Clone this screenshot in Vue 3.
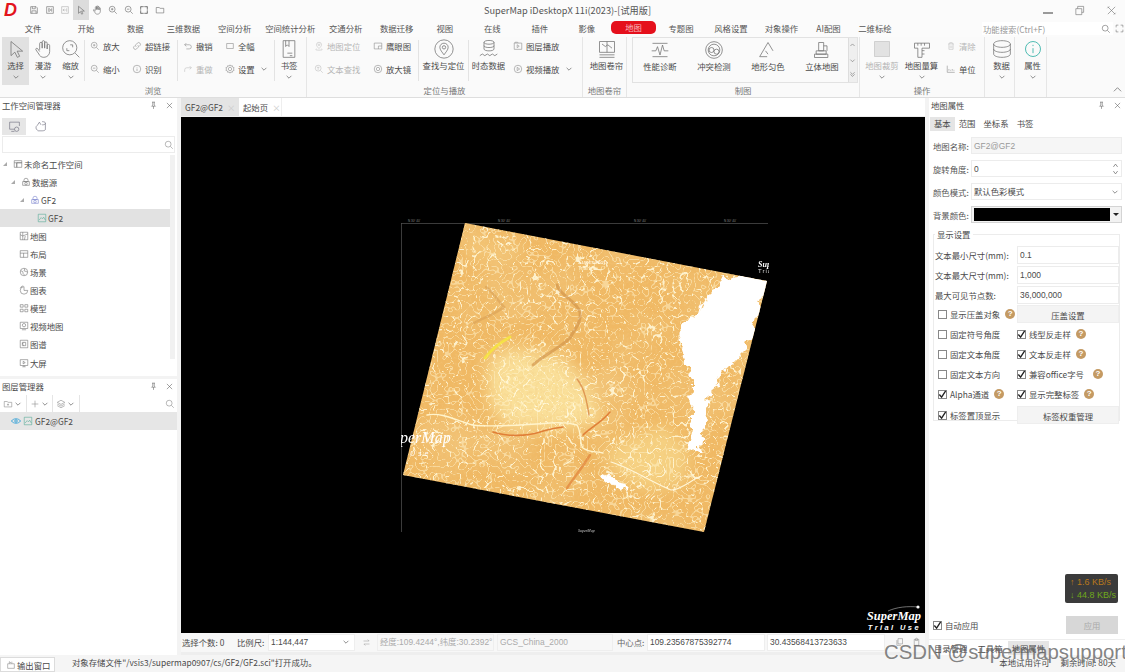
<script setup>
const icons = {
  save: 'M4 4h13l3 3v13H4zM8 4v5h7V4M7 20v-6h10v6',
  saveAs: 'M4 4h16v16H4zM9 8l5 4-5 4zM16 8v8',
  saveOff: 'M4 4h16v16H4zM10 9l-3 3 3 3M7 12h7M16 8v8',
  pointer: 'M6 3v17l4.6-4.2 3 6.2 2.8-1.3-3-6.1H20z',
  hand: 'M8 13V5.5a1.5 1.5 0 0 1 3 0V11V3.5a1.5 1.5 0 0 1 3 0V11V5a1.5 1.5 0 0 1 3 0v7V8a1.5 1.5 0 0 1 3 0v7c0 4-3 7-7 7-3 0-5-1.5-6-4l-3.5-5c-.8-1.5 1-2.5 2-1.5L8 15',
  zoomCircle: 'M10.5 2a8.5 8.5 0 1 0 0 17a8.5 8.5 0 0 0 0-17zM17 17l5 5M7 11v3h3M14 10V7h-3',
  zoomIn: 'M10 3a7 7 0 1 0 0 14a7 7 0 0 0 0-14zM15.5 15.5L21 21M7 10h6M10 7v6',
  zoomOut: 'M10 3a7 7 0 1 0 0 14a7 7 0 0 0 0-14zM15.5 15.5L21 21M7 10h6',
  fit: 'M4 4h16v16H4zM4 9V4h5M15 4h5v5M20 15v5h-5M9 20H4v-5',
  folder: 'M3 6h7l2 2h9v11H3z',
  link: 'M10 14a4 4 0 0 1 0-6l3-3a4 4 0 0 1 6 6l-2 2M14 10a4 4 0 0 1 0 6l-3 3a4 4 0 0 1-6-6l2-2',
  info: 'M12 3a9 9 0 1 0 0 18a9 9 0 0 0 0-18zM12 11v6M12 7v1.5',
  undo: 'M8 5L4 9l4 4M4 9h11a5 5 0 0 1 0 10H8',
  redo: 'M16 5l4 4-4 4M20 9H9a5 5 0 0 0-5 5v5',
  frame: 'M4 6h16v12H4z',
  gear: 'M12 8a4 4 0 1 0 0 8a4 4 0 0 0 0-8zM12 2l2 3 3.5-1 1 3.5L22 9l-2 3 2 3-3.5 1.5-1 3.5-3.5-1-2 3-2-3-3.5 1-1-3.5L2 15l2-3-2-3 3.5-1.5 1-3.5L10 5z',
  bookmark: 'M5 2h14v20H5zM8 2v7l2-2 2 2V2M10 17h6M13 20h3',
  locate: 'M12 3a6 6 0 0 0-6 6c0 3 3 6 6 9 3-3 6-6 6-9a6 6 0 0 0-6-6zM12 7a2 2 0 1 0 0 4a2 2 0 0 0 0-4zM6 19c-3 1-3 3 6 3s9-2 6-3',
  search: 'M10 3a7 7 0 1 0 0 14a7 7 0 0 0 0-14zM15.5 15.5L21 21',
  findText: 'M10 3a7 7 0 1 0 0 14a7 7 0 0 0 0-14zM15.5 15.5L21 21M7 8h6M10 8v6',
  eye: 'M3 5h18v14H3zM13 12h8M13 12v7',
  lens: 'M12 3a9 9 0 1 0 0 18a9 9 0 0 0 0-18zM12 8a4 4 0 1 0 0 8a4 4 0 0 0 0-8z',
  findLoc: 'M12 1a11 11 0 1 0 0 22a11 11 0 0 0 0-22zM12 5a5 5 0 0 0-5 5c0 3 3 6 5 9 2-3 5-6 5-9a5 5 0 0 0-5-5zM12 8a2 2 0 1 0 0 4a2 2 0 0 0 0-4z',
  temporal: 'M6 4c0-3 12-3 12 0v8c0 3-12 3-12 0zM6 4c0 3 12 3 12 0M6 8c0 3 12 3 12 0M1 20l3-2 3 2 3-2 3 2 3-2 3 2 3-2',
  layerPlay: 'M3 5h18v15H3zM10 9l5 3.5-5 3.5zM3 5l2-2h6l2 2',
  videoPlay: 'M12 3a9 9 0 1 0 0 18a9 9 0 0 0 0-18zM10 8l6 4-6 4z',
  swipe: 'M3 3h18v13H3zM3 19h18M3 22h18M6 6l4 3 3-2 5 4M12 3v13',
  perf: 'M3 4h18M3 20h18M2 13h5l2-5 3 10 3-12 2 7h5',
  conflict: 'M12 2a10 10 0 1 0 0 20a10 10 0 0 0 0-20zM12 5a7 7 0 1 0 0 14a7 7 0 0 0 0-14zM9 9a3 3 0 1 0 0 6a3 3 0 0 0 0-6zM15 11a3 3 0 1 0 0 6a3 3 0 0 0 0-6z',
  terrain: 'M2 20L12 3l6 10M2 20h9M9 13l3 4',
  solid: 'M8 3h6v10H8zM3 17h16v4H3zM5 13h12v4H5zM14 7h4v6',
  clip: 'M3 3h18v18H3z',
  measure: 'M3 5h18v6H12v11H7V11H3zM7 5v3M11 5v3M15 5v3M12 14h3M12 18h3',
  clear: 'M5 7h14M9 7V4h6v3M7 7v13h10V7M10 11v6M14 11v6',
  unit: 'M3 4v16h18M7 16v-4M11 16v-2M15 16v-4M19 16v-2',
  data: 'M12 2c5 0 10 1.5 10 4v12c0 2.5-5 4-10 4s-10-1.5-10-4V6c0-2.5 5-4 10-4zM2 6c0 2.5 5 4 10 4s10-1.5 10-4M2 12c0 2.5 5 4 10 4s10-1.5 10-4',
  ws: 'M3 4h18v5H9v11H3zM9 9h12v11H9zM3 9h6',
  ds: 'M12 3a5 5 0 0 0-5 5v3h10V8a5 5 0 0 0-5-5zM4 11h16v9H4zM12 13a3 3 0 1 0 0 6a3 3 0 0 0 0-6z',
  map: 'M3 3h18v18H3zM9 3v18M3 9l6 3 12-5M13 21l2-9',
  layout: 'M3 4h18v16H3zM3 10h18M11 10v10',
  scene: 'M12 3a9 9 0 1 0 0 18a9 9 0 0 0 0-18zM4 9l5 2 1 5 4 4M14 4l-2 5 8 3',
  chart: 'M12 4a9 9 0 1 0 9 9h-9zM10 2a9 9 0 0 0-7 6',
  model: 'M3 4h7v6H3zM14 4h7v6h-7zM3 15h7v6H3zM14 15h7v6h-7z',
  video: 'M3 3h18v15H3zM12 6a4 4 0 1 0 0 8a4 4 0 0 0 0-8zM7 21h10',
  atlas: 'M3 3h18v18H3zM8 8v8h8V8zM8 12l4 4M8 12l4-4',
  screen: 'M3 4h18v14H3zM10 8l5 3-5 3zM8 21h8M12 18v3',
  raster: 'M3 3h18v18H3zM5 17l5-6 3 3 3-4 4 7',
  pin: 'M8 3h8M10 3v8l-3 3h10l-3-3V3M12 14v7',
  close: 'M5 5l14 14M19 5L5 19',
  wsLocal: 'M3 4h18v7M3 4v13h9M6 21h6M16 13a4 4 0 1 0 0 8a4 4 0 0 0 0-8z',
  wsCloud: 'M7 19a5 5 0 0 1-1-9l4-6 3 5M15 3c3 0 6 1 6 2.5v12c0 1.5-3 2.5-6 2.5H7M15 9c3 0 6-1 6-2.5',
  addFile: 'M3 6h7l2 2h9v11H3zM12 11v5M9.5 13.5h5',
  plus: 'M12 4v16M4 12h16',
  layers: 'M12 3l9 5-9 5-9-5zM3 12l9 5 9-5M3 16l9 5 9-5',
  swap: 'M4 8h15l-4-4M20 16H5l4 4',
  copy: 'M8 3h12v14H8zM5 7v14h11',
  paste: 'M6 5h12v16H6zM9 5a3 3 0 0 1 6 0M9 5v3h6V5',
  output: 'M4 9h16v11H4zM8 9V4l4 3M14 4v5'
}

const tabs = [
  ['文件', 55], ['开始', 51], ['数据', 47.5], ['三维数据', 49], ['空间分析', 53.5], ['空间统计分析', 57.5],
  ['交通分析', 53.5], ['数据迁移', 48.5], ['视图', 47.5], ['在线', 47.5], ['插件', 47.5], ['影像', 46.5],
  ['地图', 47], ['专题图', 48], ['风格设置', 52], ['对象操作', 49], ['AI配图', 45], ['二维标绘', 48]
]
const quick = ['save', 'saveAs', 'saveOff', 'pointer', 'hand', 'zoomIn', 'zoomOut', 'fit', 'folder']

const big = (text, icon, w, caret = false, off = false) => ({ kind: 'big', text, icon, w, caret, off })
const col = (w, ...rows) => ({ kind: 'col', w, rows })
const row = (text, icon, off = false, caret = false) => ({ text, icon, off, caret })
const sep = { kind: 'sep' }

const groups = [
  { label: '浏览', w: 307, items: [
    big('选择', 'pointer', 27, true), big('漫游', 'hand', 28, true), big('缩放', 'zoomCircle', 27, true), sep,
    col(42, row('放大', 'zoomIn'), row('缩小', 'zoomOut')), col(50, row('超链接', 'link'), row('识别', 'info')), sep,
    col(42, row('撤销', 'undo'), row('重做', 'redo', true)), col(54, row('全幅', 'frame'), row('设置', 'gear', false, true)), sep,
    big('书签', 'bookmark', 28, true)
  ] },
  { label: '定位与播放', w: 276, items: [
    col(59, row('地图定位', 'locate', true), row('文本查找', 'findText', true)), col(50, row('鹰眼图', 'eye'), row('放大镜', 'lens')), sep,
    big('查找与定位', 'findLoc', 49), sep,
    big('时态数据', 'temporal', 39), col(68, row('图层播放', 'layerPlay'), row('视频播放', 'videoPlay', false, true))
  ] },
  { label: '地图卷帘', w: 44, items: [big('地图卷帘', 'swipe', 43)] },
  { label: '制图', w: 233, gallery: [
    ['性能诊断', 'perf'], ['冲突检测', 'conflict'], ['地形匀色', 'terrain'], ['立体地图', 'solid']
  ] },
  { label: '操作', w: 125, items: [
    big('地图裁剪', 'clip', 40, true, true), big('地图量算', 'measure', 39, true),
    col(42, row('清除', 'clear', true), row('单位', 'unit'))
  ] },
  { label: '', w: 30, items: [big('数据', 'data', 29, true)] },
  { label: '', w: 32, items: [big('属性', 'info', 31, true)] }
]

const tree = [
  { text: '未命名工作空间', icon: 'ws', pad: 3, arrow: true },
  { text: '数据源', icon: 'ds', pad: 11, arrow: true },
  { text: 'GF2', icon: 'ds', pad: 20, arrow: true, blue: true },
  { text: 'GF2', icon: 'raster', pad: 37, selected: true, green: true },
  { text: '地图', icon: 'map', pad: 19 },
  { text: '布局', icon: 'layout', pad: 19 },
  { text: '场景', icon: 'scene', pad: 19 },
  { text: '图表', icon: 'chart', pad: 19 },
  { text: '模型', icon: 'model', pad: 19 },
  { text: '视频地图', icon: 'video', pad: 19 },
  { text: '图谱', icon: 'atlas', pad: 19 },
  { text: '大屏', icon: 'screen', pad: 19 }
]

const sizeRows = [
  ['文本最小尺寸(mm):', '0.1'],
  ['文本最大尺寸(mm):', '1,000'],
  ['最大可见节点数:', '36,000,000']
]
const checks = [
  [{ text: '固定符号角度' }, { text: '线型反走样', on: true, help: true }],
  [{ text: '固定文本角度' }, { text: '文本反走样', on: true, help: true }],
  [{ text: '固定文本方向' }, { text: '兼容office字号', on: true, help: true, far: true }],
  [{ text: 'Alpha通道', on: true, help: true }, { text: '显示完整标签', on: true, help: true }]
]
</script>

<template>
  <div class="app">
    <header class="titlebar">
      <span class="logo">D</span>
      <div class="quick">
        <span v-for="q in quick" :key="q" class="quick-btn" :class="{ active: q === 'pointer', dim: q === 'saveOff' }">
          <svg class="ico" viewBox="0 0 24 24"><path :d="icons[q]" /></svg>
        </span>
      </div>
      <div class="title">SuperMap iDesktopX 11i(2023)-[试用版]</div>
      <div class="win">
        <span class="win-min"></span>
        <svg class="win-ico" viewBox="0 0 24 24"><path d="M4 8h13v13H4zM8 8V3h13v13h-4" /></svg>
        <svg class="win-ico" viewBox="0 0 24 24"><path d="M4 4l16 16M20 4L4 20M3 7l4-4M17 21l4-4" /></svg>
      </div>
    </header>

    <nav class="tabs">
      <span v-for="t in tabs" :key="t[0]" class="tab" :style="{ width: t[1] + 'px' }">
        <span :class="{ 'tab-red': t[0] === '地图' }">{{ t[0] }}</span>
      </span>
      <div class="fn-search">
        <span>功能搜索(Ctrl+F)</span>
        <svg class="ico" viewBox="0 0 24 24"><path :d="icons.search" /></svg>
      </div>
      <svg class="expand" viewBox="0 0 24 24"><path d="M3 9V3h6M15 3h6v6M21 15v6h-6M9 21H3v-6" /></svg>
    </nav>

    <section class="ribbon">
      <div v-for="(g, gi) in groups" :key="gi" class="group" :style="{ width: g.w + 'px' }">
        <div class="group-body">
          <div v-if="g.gallery" class="gallery">
            <div v-for="it in g.gallery" :key="it[0]" class="big">
              <svg class="big-ico" viewBox="0 0 24 24"><path :d="icons[it[1]]" /></svg>
              <span>{{ it[0] }}</span>
            </div>
            <div class="gallery-scroll">
              <svg viewBox="0 0 10 10"><path d="M2 6l3-3 3 3" /></svg>
              <svg viewBox="0 0 10 10"><path d="M2 4l3 3 3-3" /></svg>
              <svg viewBox="0 0 10 10"><path d="M2 2l3 3 3-3M2 5l3 3 3-3" /></svg>
            </div>
          </div>
          <template v-for="(it, ii) in g.items" :key="ii">
            <i v-if="it.kind === 'sep'" class="sep"></i>
            <div v-else-if="it.kind === 'big'" class="big" :class="{ picked: it.text === '选择', off: it.off }" :style="{ width: it.w + 'px' }">
              <svg class="big-ico" :class="{ teal: it.text === '属性' }" viewBox="0 0 24 24"><path :d="icons[it.icon]" /></svg>
              <span>{{ it.text }}</span>
              <svg v-if="it.caret" class="caret" viewBox="0 0 10 10"><path d="M2 3.5l3 3 3-3" /></svg>
            </div>
            <div v-else class="col" :style="{ width: it.w + 'px' }">
              <div v-for="r in it.rows" :key="r.text" class="small" :class="{ off: r.off }">
                <svg class="small-ico" viewBox="0 0 24 24"><path :d="icons[r.icon]" /></svg>
                <span>{{ r.text }}</span>
                <svg v-if="r.caret" class="caret" viewBox="0 0 10 10"><path d="M2 3.5l3 3 3-3" /></svg>
              </div>
            </div>
          </template>
        </div>
        <div class="group-label">{{ g.label }}</div>
      </div>
      <svg class="collapse" viewBox="0 0 10 10"><path d="M1 7l4-4 4 4" /></svg>
    </section>

    <main class="main">
      <aside class="left">
        <section class="workspace">
          <div class="pane-head">
            <span>工作空间管理器</span>
            <svg class="pane-ico" viewBox="0 0 24 24"><path :d="icons.pin" /></svg>
            <svg class="pane-ico" viewBox="0 0 24 24"><path :d="icons.close" /></svg>
          </div>
          <div class="ws-tools">
            <span class="ws-btn on"><svg viewBox="0 0 24 24"><path :d="icons.wsLocal" /></svg></span>
            <span class="ws-btn"><svg viewBox="0 0 24 24"><path :d="icons.wsCloud" /></svg></span>
          </div>
          <div class="ws-search">
            <svg viewBox="0 0 24 24"><path :d="icons.search" /></svg>
          </div>
          <div class="tree">
            <div class="tree-list">
              <div v-for="(n, i) in tree" :key="i" class="node" :class="{ selected: n.selected }" :style="{ paddingLeft: n.pad + 'px' }">
                <i v-if="n.arrow" class="arrow"></i>
                <svg class="node-ico" :class="{ blue: n.blue, green: n.green }" viewBox="0 0 24 24"><path :d="icons[n.icon]" /></svg>
                <span>{{ n.text }}</span>
              </div>
            </div>
            <div class="tree-scroll"></div>
          </div>
        </section>
        <section class="layers">
          <div class="pane-head">
            <span>图层管理器</span>
            <svg class="pane-ico" viewBox="0 0 24 24"><path :d="icons.pin" /></svg>
            <svg class="pane-ico" viewBox="0 0 24 24"><path :d="icons.close" /></svg>
          </div>
          <div class="layer-tools">
            <span v-for="t in ['addFile', 'plus', 'layers']" :key="t" class="layer-btn">
              <svg class="small-ico" viewBox="0 0 24 24"><path :d="icons[t]" /></svg>
              <svg class="caret" viewBox="0 0 10 10"><path d="M2 3.5l3 3 3-3" /></svg>
            </span>
            <span class="layer-search"><svg viewBox="0 0 24 24"><path :d="icons.search" /></svg></span>
          </div>
          <div class="layer-row">
            <svg class="eye" viewBox="0 0 24 24"><path d="M1 12c5-7 17-7 22 0c-5 7-17 7-22 0zM12 9a3 3 0 1 0 0 6a3 3 0 0 0 0-6z" /></svg>
            <svg class="node-ico green" viewBox="0 0 24 24"><path :d="icons.raster" /></svg>
            <span>GF2@GF2</span>
          </div>
        </section>
      </aside>

      <section class="center">
        <div class="doc-tabs">
          <span class="doc-tab active">GF2@GF2<b>×</b></span>
          <span class="doc-tab">起始页<b>×</b></span>
        </div>
        <div class="canvas">
          <svg class="map" viewBox="0 0 744 515" width="744" height="515">
            <defs>
              <clipPath id="img"><polygon points="284,106 586,164 523,415 222,358" /></clipPath>
              <clipPath id="frame"><rect x="220" y="100" width="368" height="320" /></clipPath>
              <filter id="veins" x="0" y="0" width="100%" height="100%">
                <feTurbulence type="turbulence" baseFrequency="0.075" numOctaves="2" seed="9" />
                <feColorMatrix type="matrix" values="0 0 0 0 1  0 0 0 0 0.95  0 0 0 0 0.72  0 0 0 -30 2.4" />
              </filter>
              <filter id="veins2" x="0" y="0" width="100%" height="100%">
                <feTurbulence type="turbulence" baseFrequency="0.14" numOctaves="1" seed="21" />
                <feColorMatrix type="matrix" values="0 0 0 0 1  0 0 0 0 0.9  0 0 0 0 0.6  0 0 0 -24 1.6" />
              </filter>
              <filter id="fine" x="0" y="0" width="100%" height="100%">
                <feTurbulence type="fractalNoise" baseFrequency="0.35" numOctaves="2" seed="4" />
                <feColorMatrix type="matrix" values="0 0 0 0 0.9  0 0 0 0 0.58  0 0 0 0 0.22  3 0 0 0 -1.4" />
              </filter>
              <filter id="shade" x="0" y="0" width="100%" height="100%">
                <feTurbulence type="fractalNoise" baseFrequency="0.02" numOctaves="2" seed="12" />
                <feColorMatrix type="matrix" values="0 0 0 0 0.9  0 0 0 0 0.62  0 0 0 0 0.26  0 2.2 0 0 -0.9" />
              </filter>
              <filter id="rough" x="-10%" y="-10%" width="120%" height="120%">
                <feTurbulence type="fractalNoise" baseFrequency="0.09" numOctaves="3" seed="3" />
                <feDisplacementMap in="SourceGraphic" scale="18" xChannelSelector="R" yChannelSelector="G" />
              </filter>
              <filter id="soft" x="-20%" y="-20%" width="140%" height="140%">
                <feGaussianBlur stdDeviation="8" />
              </filter>
            </defs>
            <g class="grid">
              <path d="M220.5 106V415M220 106.5H587" />
              <text x="227" y="105">N 30° 40'</text><text x="317" y="105">N 30° 40'</text>
              <text x="453" y="105">N 30° 40'</text><text x="543" y="105">N 30° 40'</text>
            </g>
            <g clip-path="url(#img)">
              <rect x="200" y="90" width="400" height="340" fill="#f0b964" />
              <rect x="200" y="90" width="400" height="340" filter="url(#shade)" opacity="0.5" />
              <g filter="url(#soft)">
                <path d="M306 250l22-20 50 10 30 30 14 35-50 8-45-4-18-20z" fill="#fbe6a2" opacity="0.85" />
                <path d="M425 330l60-22 24 30-10 30-35 5-30-15z" fill="#f8dc8e" opacity="0.7" />
                <path d="M285 115l60 12-8 14-50 6z" fill="#f5cb80" opacity="0.6" />
              </g>
              <rect x="200" y="90" width="400" height="340" filter="url(#fine)" opacity="0.35" />
              <rect x="200" y="90" width="400" height="340" filter="url(#veins)" opacity="0.85" />
              <rect x="200" y="90" width="400" height="340" filter="url(#veins2)" opacity="0.5" />
              <g filter="url(#rough)">
                <path d="M546 158l42 4-12 36-10 33-24 24-13 23-10 63-10-10 2-66-15-50 20-17 13-23z" fill="#fff" />
                <path d="M422 358l16 3 11 14-16-4z" fill="#fff" />
              </g>
              <path d="M304 241c6-8 16-16 25-21" stroke="#f6e53e" stroke-width="3" fill="none" stroke-linecap="round" opacity="0.85" />
              <g fill="none" stroke-linecap="round">
                <path d="M246 298c16-3 30 6 46 10 14 2 50 0 77-2 12-1 20 0 27 2 5 8 2 18 6 23 6 5 14 3 20 5" stroke="#fff4cc" stroke-width="1.4" />
                <path d="M312 315c15 5 34 4 47 0 8-3 16-4 23-5M402 318c8-8 18-12 27-23" stroke="#e07f38" stroke-width="1.6" />
                <path d="M376 168c2 10 20 16 23 27 2 10-6 18-10 26-10 10-28 18-37 27" stroke="#d3964c" stroke-width="3" opacity="0.7" />
                <path d="M305 170c8 6 12 14 18 20-10 8-20 10-30 16" stroke="#d9a055" stroke-width="2.5" opacity="0.6" />
                <path d="M409 338c-6 10-14 20-23 33" stroke="#e28a40" stroke-width="2.5" opacity="0.8" />
                <path d="M396 262c8 10 10 24 12 36" stroke="#d98a45" stroke-width="1.5" opacity="0.8" />
                <path d="M430 345c20 6 40 20 60 28 10 0 20-10 30-14" stroke="#fff6d8" stroke-width="1.2" />
              </g>
              <text class="wm-small" x="397" y="147">SuperMap</text>
              <text class="wm-tiny2" x="397" y="153">Trial Use</text>
            </g>
            <g clip-path="url(#frame)">
              <text class="wm-big" x="219" y="326">perMap</text>
              <text class="wm-use" x="229" y="339">Use</text>
              <text class="wm-mid" x="577" y="150">Sup</text>
              <text class="wm-tiny" x="577" y="156">Tria</text>
            </g>
            <g class="ticks"><text x="397" y="415">SuperMap</text></g>
          </svg>
          <div class="brand">
            <svg class="brand-arc" viewBox="0 0 34 8"><path d="M1 7C10 3 20 2 32 3" /><circle cx="31" cy="3" r="1.6" /></svg>
            <span class="brand-name">SuperMap</span>
            <span class="brand-sub">Trial Use</span>
          </div>
        </div>
        <div class="map-status">
          <span class="s-count">选择个数: 0</span>
          <span class="s-scale">比例尺:</span>
          <span class="s-box s-combo">1:144,447
            <svg class="caret" viewBox="0 0 10 10"><path d="M2 3.5l3 3 3-3" /></svg>
          </span>
          <svg class="s-swap" viewBox="0 0 24 24"><path :d="icons.swap" /></svg>
          <span class="s-box s-dim s-lon">经度:109.4244°,纬度:30.2392°</span>
          <span class="s-box s-dim s-crs">GCS_China_2000</span>
          <span class="s-center">中心点:</span>
          <span class="s-box s-val">109.23567875392774</span>
          <span class="s-box s-val">30.43568413723633</span>
          <svg class="s-ico" viewBox="0 0 24 24"><path :d="icons.copy" /></svg>
          <svg class="s-ico" viewBox="0 0 24 24"><path :d="icons.paste" /></svg>
        </div>
      </section>

      <aside class="right">
        <div class="pane-head">
          <span>地图属性</span>
          <svg class="pane-ico" viewBox="0 0 24 24"><path :d="icons.pin" /></svg>
          <svg class="pane-ico" viewBox="0 0 24 24"><path :d="icons.close" /></svg>
        </div>
        <div class="sub-tabs">
          <span class="on">基本</span><span>范围</span><span>坐标系</span><span>书签</span>
        </div>
        <div class="props">
          <label class="prop"><span>地图名称:</span><span class="input readonly">GF2@GF2</span></label>
          <label class="prop"><span>旋转角度:</span><span class="input">0<span class="spin">
            <svg viewBox="0 0 10 10"><path d="M2 7l3-4 3 4" /></svg>
            <svg viewBox="0 0 10 10"><path d="M2 3l3 4 3-4" /></svg>
          </span></span></label>
          <label class="prop"><span>颜色模式:</span><span class="input">默认色彩模式
            <svg class="caret" viewBox="0 0 10 10"><path d="M2 3.5l3 3 3-3" /></svg>
          </span></label>
          <label class="prop"><span>背景颜色:</span><span class="input color"><i class="swatch"></i><i class="drop"></i></span></label>
        </div>
        <fieldset class="display">
          <legend>显示设置</legend>
          <div v-for="r in sizeRows" :key="r[0]" class="d-row">
            <span>{{ r[0] }}</span><span class="input d-input">{{ r[1] }}</span>
          </div>
          <div class="d-row check-row first">
            <span class="check"><i class="box"></i>显示压盖对象<em class="help">?</em></span>
            <span class="btn">压盖设置</span>
          </div>
          <div v-for="(c, i) in checks" :key="i" class="d-row check-row plain">
            <span v-for="o in c" :key="o.text" class="check">
              <i class="box">
                <svg v-if="o.on" viewBox="0 0 10 10"><path d="M1.5 5l2.5 3 4.5-7" /></svg>
              </i>{{ o.text }}<em v-if="o.help" class="help" :class="{ far: o.far }">?</em>
            </span>
          </div>
          <div class="d-row check-row last">
            <span class="check"><i class="box"><svg viewBox="0 0 10 10"><path d="M1.5 5l2.5 3 4.5-7" /></svg></i>标签置顶显示</span>
            <span class="btn">标签权重管理</span>
          </div>
        </fieldset>
        <div class="right-space">
          <div class="net">
            <span class="up">↑ 1.6 KB/s</span>
            <span class="down">↓ 44.8 KB/s</span>
          </div>
        </div>
        <div class="apply">
          <span class="check"><i class="box"><svg viewBox="0 0 10 10"><path d="M1.5 5l2.5 3 4.5-7" /></svg></i>自动应用</span>
          <span class="apply-btn">应用</span>
        </div>
        <div class="bottom-tabs">
          <span>目录管理</span><span>工具箱</span><span class="on">地图属性</span>
        </div>
      </aside>
    </main>

    <footer class="status">
      <span class="out-btn">
        <svg class="small-ico" viewBox="0 0 24 24"><path :d="icons.output" /></svg>输出窗口
      </span>
      <span class="msg">对象存储文件"/vsis3/supermap0907/cs/GF2/GF2.sci"打开成功。</span>
      <span class="license">本地试用许可</span>
      <span class="remain">剩余时间: 80天</span>
    </footer>

    <div class="watermark">CSDN @supermapsupport</div>
  </div>
</template>

<style scoped>
.app {
  position: relative;
  width: 1125px;
  height: 672px;
  overflow: hidden;
  display: flex;
  flex-direction: column;
  background: #f3f3f3;
  color: #4a4a4a;
  font-family: "Noto Sans CJK SC", "Noto Sans", sans-serif;
  font-size: 8.4px;
  line-height: 12px;
}

svg { fill: none; stroke: #666; stroke-width: 1.4; display: block; flex: none; }

.titlebar {
  height: 20px;
  display: flex;
  align-items: center;
  background: #fbfbfb;
  position: relative;
}
.logo {
  width: 26px;
  padding-left: 4px;
  box-sizing: border-box;
  color: #e3141c;
  font: italic bold 18px "Liberation Sans", sans-serif;
}
.quick { display: flex; }
.quick-btn { width: 15.8px; height: 20px; display: flex; align-items: center; justify-content: center; }
.quick-btn.active { background: #dcdcdc; }
.quick-btn.dim svg { stroke: #aaa; }
.ico { width: 10px; height: 10px; }
.title {
  position: absolute;
  left: 484px;
  top: 4px;
  font-size: 9.2px;
  color: #555;
}
.win { margin-left: auto; display: flex; align-items: center; gap: 21px; padding-right: 8px; }
.win-min { width: 10px; height: 2px; margin-top: 6px; background: #9a9a9a; }
.win-ico { width: 11px; height: 11px; stroke: #777; }

.tabs {
  height: 15px;
  display: flex;
  align-items: center;
  padding: 0 0 3px 5.5px;
  background: #fbfbfb;
  position: relative;
  margin-bottom: -1px;
}
.tab { text-align: center; flex: none; color: #555; }
.tab-red {
  display: inline-block;
  width: 45px;
  height: 13px;
  line-height: 13px;
  border-radius: 5px;
  background: #e5101c;
  color: #f6b9bc;
}
.fn-search {
  position: absolute;
  left: 982px;
  top: 2px;
  width: 131px;
  height: 13px;
  display: flex;
  align-items: center;
  justify-content: space-between;
  background: #fff;
  color: #999;
  padding: 0 2px 0 1px;
  box-sizing: border-box;
}
.expand { position: absolute; left: 1115px; top: 4px; width: 9px; height: 9px; stroke: #666; }

.ribbon {
  height: 60px;
  display: flex;
  background: #fafafa;
  border-bottom: 1px solid #dedede;
  position: relative;
}
.group {
  flex: none;
  box-sizing: border-box;
  border-right: 1px solid #e6e6e6;
  display: flex;
  flex-direction: column;
}
.group-body { height: 48px; display: flex; align-items: stretch; padding-left: 2px; }
.group-label { text-align: center; color: #777; line-height: 11px; }
.sep { flex: none; width: 1px; margin: 3px 0 4px; background: #e3e3e3; }
.big {
  flex: none;
  display: flex;
  flex-direction: column;
  align-items: center;
  white-space: nowrap;
  padding-top: 2px;
  color: #4a4a4a;
}
.big.picked { background: #e1e1e1; }
.big.off { color: #b3b3b3; }
.big.off .big-ico { stroke: #c5c5c5; fill: #e2e2e2; }
.big-ico { width: 20px; height: 20px; stroke: #707070; stroke-width: 0.9; }
.big-ico.teal { stroke: #17a79b; }
.col { flex: none; display: flex; flex-direction: column; gap: 11px; padding: 3px 0 0 5px; box-sizing: border-box; }
.small { display: flex; align-items: center; gap: 3px; white-space: nowrap; }
.small.off { color: #b5b5b5; }
.small.off .small-ico { stroke: #c0c0c0; }
.small-ico { width: 10px; height: 10px; stroke: #8a8a8a; }
.caret { width: 8px; height: 8px; stroke: #666; stroke-width: 0.9; }
.big .caret { margin-top: 2px; }
.small .caret { margin-left: 2px; }
.gallery {
  flex: none;
  width: 226px;
  margin-left: 3px;
  height: 46px;
  box-sizing: border-box;
  border: 1px solid #e2e2e2;
  display: flex;
  position: relative;
}
.gallery .big { width: 54px; padding-top: 2px; }
.gallery-scroll {
  position: absolute;
  right: 0;
  top: 0;
  bottom: 0;
  width: 8px;
  display: flex;
  flex-direction: column;
  background: #efefef;
  border-left: 1px solid #ddd;
}
.gallery-scroll svg { flex: 1; width: 7px; height: 15px; stroke-width: 0.8; }
.collapse { position: absolute; right: 3px; top: 48px; width: 9px; height: 9px; stroke-width: 0.8; }

.main { flex: 1; min-height: 0; height: 558px; display: flex; }
.left { width: 177px; flex: none; display: flex; flex-direction: column; gap: 3px; }
.pane-head {
  height: 16px;
  flex: none;
  display: flex;
  align-items: center;
  gap: 7px;
  padding: 0 3px 2px 2px;
  box-sizing: border-box;
  background: #fff;
  color: #4a4a4a;
}
.pane-head span { margin-right: auto; }
.pane-ico { width: 9px; height: 9px; stroke: #555; }
.workspace { height: 278px; flex: none; background: #fff; display: flex; flex-direction: column; }
.ws-tools { height: 20px; display: flex; align-items: center; gap: 2px; padding-left: 2px; margin-top: 2px; }
.ws-btn { width: 24px; height: 17px; display: flex; align-items: center; justify-content: center; }
.ws-btn.on { background: #e6e6e6; }
.ws-btn svg { width: 13px; height: 13px; stroke: #667; stroke-width: 1.1; }
.ws-search {
  height: 17px;
  box-sizing: border-box;
  margin: 0 2px;
  border: 1px solid #ececec;
  display: flex;
  align-items: center;
  justify-content: flex-end;
}
.ws-search svg, .layer-search svg { width: 10px; height: 10px; stroke: #888; }
.tree { flex: 1; display: flex; min-height: 0; padding-top: 1px; }
.tree-list { flex: 1; margin-top: 1px; }
.tree-scroll { width: 5px; height: 204px; margin: 1px 2px 0 0; background: #f1f1f1; }
.node { height: 18.1px; display: flex; align-items: center; position: relative; gap: 1px; box-sizing: border-box; padding-bottom: 1px; }
.node.selected { background: #e2e2e2; }
.arrow {
  width: 0;
  height: 0;
  border-style: solid;
  border-width: 0 0 4px 4px;
  border-color: transparent transparent #aaa transparent;
  margin-right: 5px;
}
.node-ico { width: 10px; height: 10px; stroke: #666; stroke-width: 1.3; }
.node-ico.blue { stroke: #6d78c9; }
.node-ico.green { stroke: #48a58f; }
.layers { flex: 1; background: #fff; display: flex; flex-direction: column; }
.layer-tools { height: 17px; display: flex; align-items: stretch; }
.layer-btn {
  width: 25.5px;
  display: flex;
  align-items: center;
  justify-content: center;
  gap: 1px;
  border-right: 1px solid #e5e5e5;
}
.layer-search { flex: 1; display: flex; align-items: center; justify-content: flex-end; padding-right: 2px; }
.layer-row { height: 18px; display: flex; align-items: center; gap: 2px; padding: 0 0 1px 11px; box-sizing: border-box; background: #e6e6e6; }
.eye { width: 10px; height: 10px; stroke: #2c9fd6; stroke-width: 2; }

.center { width: 744px; flex: none; margin-left: 4px; display: flex; flex-direction: column; background: #fff; }
.doc-tabs { height: 19px; display: flex; background: #fff; flex: none; border-bottom: 1px solid #eee; box-sizing: border-box; }
.doc-tab { display: flex; align-items: center; padding: 0 4px; gap: 4px; white-space: nowrap; box-sizing: border-box; overflow: hidden; }
.doc-tab:first-child { width: 58px; }
.doc-tab:nth-child(2) { width: 43px; border-right: 1px solid #eee; }
.doc-tab.active { background: #e4e4e4; }
.doc-tab b { font-weight: 400; color: #ccc; }
.canvas { height: 516px; flex: none; background: #000; position: relative; overflow: hidden; }
.map { stroke: none; stroke-width: 0; }
.grid path { stroke: #555; stroke-width: 0.7; fill: none; }
.grid text { font: 3px "Liberation Sans", sans-serif; fill: #888; stroke: none; }
.ticks text { font: italic 4px "Liberation Serif", serif; fill: #ccc; stroke: none; }
.wm-small { font: italic 7px "Liberation Serif", serif; fill: #fff8e4; stroke: none; }
.wm-tiny2 { font: 5px "Liberation Sans", sans-serif; fill: #fff3d0; stroke: none; }
.wm-big { font: italic 16px "Liberation Serif", serif; fill: #fff; stroke: none; }
.wm-use { font: italic 7px "Liberation Sans", sans-serif; letter-spacing: 3px; fill: #fff; stroke: none; }
.wm-mid { font: italic bold 8px "Liberation Serif", serif; fill: #fff; stroke: none; }
.wm-tiny { font: 6px "Liberation Sans", sans-serif; fill: #ddd; letter-spacing: 1px; stroke: none; }
.brand {
  position: absolute;
  right: 4px;
  bottom: 0;
  display: flex;
  flex-direction: column;
  align-items: flex-end;
  color: #fff;
}
.brand-arc { position: absolute; right: 0; top: -5px; width: 34px; height: 8px; stroke: #ddd; stroke-width: 0.5; }
.brand-arc circle { fill: #fff; stroke: none; }
.brand-name { font: italic bold 12.5px/14px "Liberation Serif", serif; }
.brand-sub { font: italic bold 7.5px/10px "Liberation Sans", sans-serif; letter-spacing: 2.4px; }
.map-status {
  flex: 1;
  display: flex;
  align-items: center;
  background: #f7f7f7;
  border-bottom: 3px solid #eee;
  padding: 0 0 1px 1px;
  white-space: nowrap;
}
.s-count { width: 55px; }
.s-scale { width: 31px; }
.s-box {
  height: 17px;
  line-height: 17px;
  background: #fff;
  border: 1px solid #eee;
  box-sizing: border-box;
  padding-left: 2px;
  display: flex;
  align-items: center;
  justify-content: space-between;
  font-family: "Liberation Sans", "Noto Sans CJK SC", sans-serif;
  font-size: 8.4px;
}
.s-combo { width: 87px; padding-right: 4px; }
.s-swap { width: 9px; height: 9px; margin: 0 6px 0 7px; stroke: #999; }
.s-dim { color: #aaa; background: #f7f7f7; }
.s-lon { width: 117px; margin-right: 3px; }
.s-crs { width: 116px; margin-right: 4px; }
.s-center { width: 30px; color: #666; }
.s-val { width: 118px; margin-right: 2px; }
.s-ico { width: 9px; height: 10px; margin-left: 8px; stroke: #666; stroke-width: 1.1; }

.right { width: 196px; flex: none; margin-left: 4px; background: #fff; display: flex; flex-direction: column; }
.sub-tabs { height: 14px; margin-top: 3px; display: flex; align-items: center; flex: none; }
.sub-tabs span { padding: 0 4px 1px; line-height: 13px; }
.sub-tabs span:first-child { margin-left: 1px; }
.sub-tabs .on { background: #e5e5e5; }
.props { padding: 6px 3px 0 4px; display: flex; flex-direction: column; gap: 6px; flex: none; }
.prop { display: flex; align-items: center; }
.prop > span:first-child { width: 38px; flex: none; color: #555; }
.input {
  height: 17px;
  box-sizing: border-box;
  border: 1px solid #ececec;
  background: #fff;
  display: flex;
  align-items: center;
  justify-content: space-between;
  padding: 0 2px;
  flex: 1;
  font-family: "Liberation Sans", "Noto Sans CJK SC", sans-serif;
}
.input.readonly { background: #f6f6f6; color: #999; }
.spin { display: flex; flex-direction: column; }
.spin svg { width: 7px; height: 7px; stroke-width: 1; }
.color { padding: 0; border-color: #d4d4d4; background: #f2f2f2; }
.swatch { flex: 1; height: 13px; background: #000; margin-left: 2px; }
.drop {
  width: 0;
  height: 0;
  margin: 0 2px 0 3px;
  border-style: solid;
  border-width: 3px 3px 0;
  border-color: #222 transparent transparent;
}
.display {
  margin: 5px 5px 0 4px;
  padding: 5px 0 0;
  height: 193px;
  box-sizing: border-box;
  border: 1px solid #ececec;
  min-width: 0;
  flex: none;
}
.display legend { padding: 0 2px; margin-left: 1px; line-height: 12px; font-size: 8.4px; }
.d-row { height: 20px; display: grid; grid-template-columns: 82px 102px; align-items: center; padding-left: 1px; }
.d-input { height: 18px; }
.check-row { padding-left: 4px; grid-template-columns: 79px 102px; }
.check-row.first { height: 18px; margin-bottom: 1px; }
.check-row.plain { height: 20px; }
.check-row.last { height: 20px; margin-top: 1px; }
.check { display: flex; align-items: center; white-space: nowrap; }
.box {
  width: 9px;
  height: 9px;
  flex: none;
  box-sizing: border-box;
  border: 1px solid #888;
  background: #fff;
  margin-right: 3px;
}
.box svg { width: 9px; height: 9px; margin: -1px; stroke: #222; stroke-width: 1.5; }
.help {
  width: 10px;
  height: 10px;
  margin-left: 5px;
  border-radius: 50%;
  background: #c49a63;
  color: #fff;
  font: bold 8px/10px "Liberation Sans", sans-serif;
  text-align: center;
}
.help.far { margin-left: 9px; }
.btn {
  height: 18px;
  line-height: 18px;
  text-align: center;
  background: #f4f4f4;
  border: 1px solid #eee;
  box-sizing: border-box;
}
.right-space { flex: 1; position: relative; }
.net {
  position: absolute;
  left: 136px;
  top: 153px;
  width: 53px;
  height: 29px;
  box-sizing: border-box;
  padding: 2px 0 0 5px;
  background: #3b3b3b;
  border-radius: 2px;
  display: flex;
  flex-direction: column;
  font: 9px/13px "Liberation Sans", sans-serif;
  white-space: nowrap;
}
.up { color: #b8781c; }
.down { color: #6fa81c; }
.apply { height: 18px; display: flex; align-items: center; justify-content: space-between; padding: 0 7px 0 4px; flex: none; }
.apply-btn { width: 52px; height: 18px; line-height: 18px; text-align: center; background: #d7d7d7; color: #aaa; }
.bottom-tabs { height: 15px; margin-top: 5px; display: flex; align-items: center; border-top: 1px solid #eee; flex: none; }
.bottom-tabs span { line-height: 14px; white-space: nowrap; }
.bottom-tabs span:nth-child(1) { padding: 0 10px 0 5px; }
.bottom-tabs span:nth-child(2) { padding: 0 5px 0 0; }
.bottom-tabs .on { padding: 0 4px; background: #e5e5e5; }

.status {
  height: 17px;
  flex: none;
  box-sizing: border-box;
  padding-bottom: 3px;
  display: flex;
  align-items: center;
  background: #f5f5f5;
  position: relative;
}
.out-btn {
  width: 55px;
  height: 15px;
  margin-top: 5px;
  box-sizing: border-box;
  background: #fff;
  border: 1px solid #dcdcdc;
  display: flex;
  align-items: center;
  gap: 1px;
  padding-left: 5px;
}
.msg { margin-left: 17px; }
.license { margin-left: auto; margin-right: 11px; }
.remain { margin-right: 9px; }
.watermark {
  position: absolute;
  left: 884px;
  top: 640px;
  font: 20.4px/24px "Liberation Sans", sans-serif;
  color: rgba(100, 100, 100, 0.8);
  white-space: nowrap;
  pointer-events: none;
}
</style>
